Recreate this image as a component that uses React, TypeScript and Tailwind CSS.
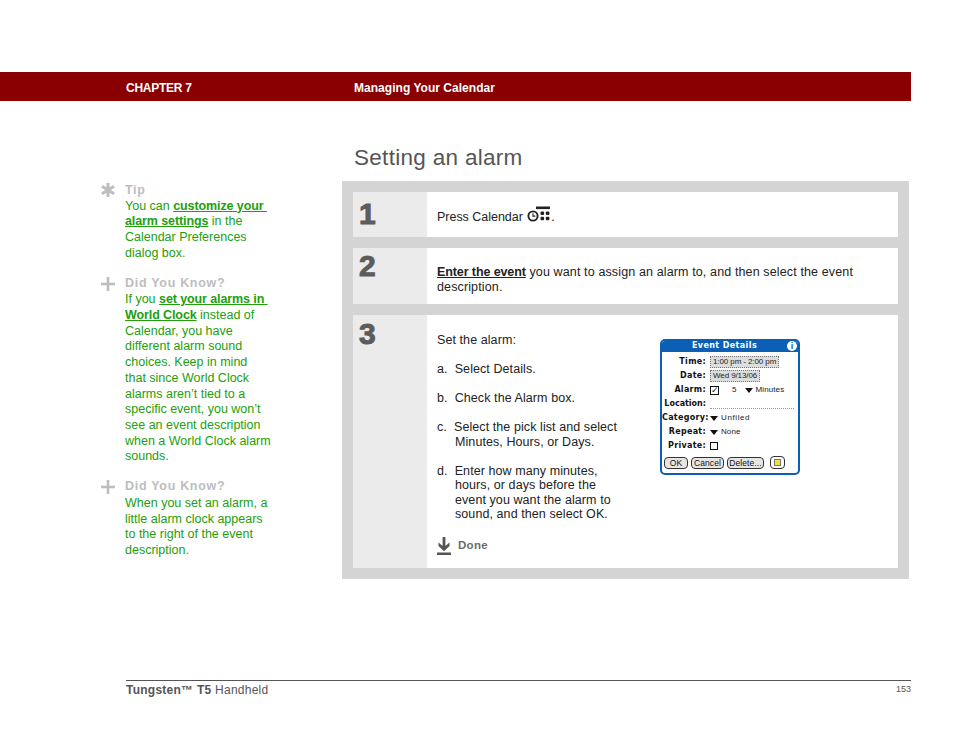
import React from "react";

const F = "font-['Liberation_Sans',Arial,sans-serif]";

function Note({ icon, title, children, mt, bodyMt = "", iconPad = "pt-[2px]" }: { icon: React.ReactNode; title: string; children: React.ReactNode; mt: string; bodyMt?: string; iconPad?: string }) {
  return (
    <div className={`flex ${mt}`}>
      <div className={`w-[25px] shrink-0 pl-[1px] ${iconPad}`}>{icon}</div>
      <div className="w-[170px] shrink-0 whitespace-nowrap">
        <div className="text-[12.5px] leading-[16px] font-bold text-[#bdbdbd] tracking-[0.7px]">{title}</div>
        <div className={`text-[12.5px] leading-[15.7px] text-[#22a00c] ${bodyMt}`}>{children}</div>
      </div>
    </div>
  );
}

const Lnk = ({ children }: { children: React.ReactNode }) => <span className="font-bold underline tracking-[-0.1px]">{children}</span>;

const Plus = () => (
  <svg width="14" height="14" viewBox="0 0 14 14"><path d="M5.7 0h2.6v5.7H14v2.6H8.3V14H5.7V8.3H0V5.7h5.7z" fill="#bdbdbd" /></svg>
);
const Star = () => (
  <svg width="14" height="14" viewBox="0 0 14 14"><g stroke="#bdbdbd" strokeWidth="3"><path d="M7 0v14M1 3.2l12 7.6M13 3.2L1 10.8" /></g></svg>
);

function Row({ n, h, numPad, children, textClass }: { n: string; h: string; numPad: string; children: React.ReactNode; textClass: string }) {
  return (
    <div className={`flex ${h}`}>
      <div className={`w-[74px] shrink-0 bg-[#ebebeb] pl-[6px] ${numPad} text-[30px] leading-[30px] font-bold text-[#5c5c5c] [-webkit-text-stroke:1px_#5c5c5c]`}>{n}</div>
      <div className={`flex-1 bg-white pl-[10px] text-[#222] text-[12.5px] leading-[14.5px] ${textClass}`}>{children}</div>
    </div>
  );
}

function CalIcon() {
  return (
    <svg width="24" height="17" viewBox="0 0 24 17" className="inline-block align-[-2px] ml-[1px]">
      <rect x="9" y="0.5" width="14" height="2.6" fill="#222" />
      <circle cx="6" cy="10" r="4.6" fill="none" stroke="#222" strokeWidth="1.9" />
      <path d="M6 7.2v2.9h2.400" fill="none" stroke="#222" strokeWidth="1.100" />
      <g fill="#222">
        <rect x="13.5" y="5.5" width="3.6" height="3.4" rx="1" /><rect x="18.8" y="5.5" width="3.6" height="3.4" rx="1" />
        <rect x="13.5" y="10.8" width="3.6" height="3.4" rx="1" /><rect x="18.8" y="10.8" width="3.6" height="3.4" rx="1" />
      </g>
    </svg>
  );
}

function Tri() {
  return <svg width="8" height="5" viewBox="0 0 8 5" className="shrink-0"><path d="M0 0h8L4 5z" fill="#111" /></svg>;
}

function Btn({ children, w }: { children: React.ReactNode; w: string }) {
  return <div className={`${w} h-[12px] border border-[#333] rounded-[4px] bg-[#e6e6e6] text-[8.5px] leading-[10px] text-center text-[#111] whitespace-nowrap`}>{children}</div>;
}

function DRow({ label, children, track = "tracking-[0.3px]" }: { label: string; children?: React.ReactNode; track?: string }) {
  return (
    <div className="flex items-center h-[14px]">
      <div className={`w-[44px] shrink-0 text-right text-[8px] font-bold ${track} text-[#111] font-['DejaVu_Sans',sans-serif] whitespace-nowrap`}>{label}</div>
      <div className="flex items-center pl-[4px] flex-1 text-[8px] text-[#222] whitespace-nowrap">{children}</div>
    </div>
  );
}

function Dialog() {
  return (
    <div className="w-[140px] h-[136px] border-2 border-[#0b5fb5] rounded-[5px] bg-white flex flex-col shrink-0 overflow-hidden">
      <div className="h-[12px] -mt-[1px] bg-[#0b5fb5] flex items-center shrink-0 pr-[1px]">
        <div className="flex-1 text-center text-white text-[8px] font-bold tracking-[0.4px] font-['DejaVu_Sans',sans-serif]">Event Details</div>
        <div className="w-[10px] h-[10px] rounded-full bg-white text-[#0b5fb5] text-[9px] leading-[10px] font-bold text-center">i</div>
      </div>
      <div className="flex flex-col pt-[3px] pr-[4px]">
        <DRow label="Time:"><span className="bg-[#ddd] border border-dotted border-[#777] px-[2px] leading-[10px] tracking-[-0.1px]">1:00 pm - 2:00 pm</span></DRow>
        <DRow label="Date:"><span className="bg-[#ddd] border border-dotted border-[#777] px-[2px] leading-[10px] tracking-[-0.1px]">Wed 9/13/06</span></DRow>
        <DRow label="Alarm:">
          <span className="w-[9px] h-[9px] border border-[#111] text-[9px] leading-[6px] mr-[7px]">✓</span>
          <span className="mr-[8px] ml-[6px]">5</span><Tri /><span className="ml-[3px] tracking-[0.1px]">Minutes</span>
        </DRow>
        <DRow label="Location:" track="tracking-[0px]"><span className="flex-1 border-b border-dotted border-[#999] h-[9px]" /></DRow>
        <DRow label="Category:"><Tri /><span className="ml-[3px] tracking-[0.6px]">Unfiled</span></DRow>
        <DRow label="Repeat:"><Tri /><span className="ml-[3px]">None</span></DRow>
        <DRow label="Private:"><span className="w-[8px] h-[8px] border border-[#111]" /></DRow>
      </div>
      <div className="flex items-center gap-[3px] pl-[2px] mt-[3px]">
        <Btn w="w-[24px]">OK</Btn>
        <Btn w="w-[33px]">Cancel</Btn>
        <Btn w="w-[37px]">Delete...</Btn>
        <div className="ml-[3px] w-[15px] h-[13px] border border-[#333] rounded-[4px] bg-white flex items-center justify-center">
          <div className="w-[7px] h-[7px] bg-[#f6e040] border border-[#777]" />
        </div>
      </div>
    </div>
  );
}

export default function App() {
  return (
    <div className={`w-[954px] h-[738px] bg-white flex flex-col pt-[72px] overflow-hidden ${F}`}>
      <div className="w-[911px] h-[29px] bg-[#8a0000] flex items-center text-white text-[12px] font-bold pl-[126px] pt-[2px] shrink-0">
        <div className="w-[228px] tracking-[-0.25px]">CHAPTER 7</div>
        <div className="tracking-[0.03px]">Managing Your Calendar</div>
      </div>
      <div className="flex h-[579px] shrink-0">
        <div className="w-[342px] shrink-0 pl-[100px] pt-[81px]">
          <Note mt="" icon={<Star />} title="Tip" bodyMt="mt-[0.5px]" iconPad="pt-[1px]">
            You can <Lnk>customize your&nbsp;</Lnk><br /><Lnk>alarm settings</Lnk> in the<br />Calendar Preferences<br />dialog box.
          </Note>
          <Note mt="mt-[14px]" icon={<Plus />} title="Did You Know?" bodyMt="mt-[1px]">
            If you <Lnk>set your alarms in&nbsp;</Lnk><br /><Lnk>World Clock</Lnk> instead of<br />Calendar, you have<br />different alarm sound<br />choices. Keep in mind<br />that since World Clock<br />alarms aren’t tied to a<br />specific event, you won’t<br />see an event description<br />when a World Clock alarm<br />sounds.
          </Note>
          <Note mt="mt-[13px]" icon={<Plus />} title="Did You Know?" bodyMt="mt-[2px]">
            When you set an alarm, a<br />little alarm clock appears<br />to the right of the event<br />description.
          </Note>
        </div>
        <div className="w-[567px] shrink-0">
          <h1 className="h-[80px] pl-[12px] pt-[43px] text-[22.5px] leading-[28px] text-[#555] tracking-[0.3px] font-normal">Setting an alarm</h1>
          <div className="bg-[#d4d4d4] h-[398px] px-[11px] py-[11px] flex flex-col gap-[11px]">
            <Row n="1" h="h-[45px]" numPad="pt-[7px]" textClass="flex items-center pt-[1px] tracking-[-0.02px]">
              <span>Press Calendar <CalIcon />.</span>
            </Row>
            <Row n="2" h="h-[56px]" numPad="pt-[3px]" textClass="pt-[17px] tracking-[0.13px]">
              <span className="font-bold underline tracking-[-0.1px]">Enter the event</span> you want to assign an alarm to, and then select the event<br />description.
            </Row>
            <Row n="3" h="h-[253px]" numPad="pt-[4px]" textClass="pt-[18px] flex tracking-[0.08px]">
              <div className="w-[223px] shrink-0">
                <p>Set the alarm:</p>
                <p className="mt-[14.5px]">a.&nbsp; Select Details.</p>
                <p className="mt-[14.5px]">b.&nbsp; Check the Alarm box.</p>
                <p className="mt-[14.5px] pl-[18px] -indent-[18px]">c.&nbsp; Select the pick list and select<br />Minutes, Hours, or Days.</p>
                <p className="mt-[14.5px] pl-[18px] -indent-[18px]">d.&nbsp; Enter how many minutes,<br />hours, or days before the<br />event you want the alarm to<br />sound, and then select OK.</p>
                <div className="flex items-center mt-[15px]">
                  <svg width="14" height="18" viewBox="0 0 14 18" className="shrink-0">
                    <path d="M5.6 0h2.8v9L12.5 5.5v3.4L7 14.2 1.5 8.9V5.5L5.6 9z" fill="#555" />
                    <rect x="0" y="15.5" width="14" height="2.5" fill="#555" />
                  </svg>
                  <span className="ml-[7px] font-bold text-[#6b6b6b] text-[11.5px] tracking-[0.3px]">Done</span>
                </div>
              </div>
              <div className="pt-[6px]"><Dialog /></div>
            </Row>
          </div>
        </div>
      </div>
      <div className="w-[785px] ml-[126px] border-t border-[#555] flex justify-between items-center h-[18px] shrink-0">
        <span className="text-[12px] text-[#555] tracking-[0.25px]"><b>Tungsten™ T5</b> Handheld</span>
        <span className="text-[9px] text-[#555]">153</span>
      </div>
    </div>
  );
}
